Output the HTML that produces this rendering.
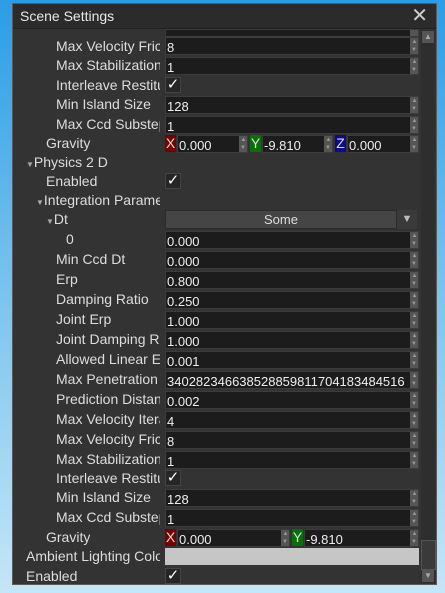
<!DOCTYPE html><html><head><style>
body{margin:0;width:445px;height:593px;overflow:hidden;background:linear-gradient(#2a9de6,#7cc4ee 50%,#c4e6f6);font-family:"Liberation Sans",sans-serif;position:relative}
.win{position:absolute;left:12px;top:3px;width:423px;height:580px;background:#333;border:1px solid #5a5a5a}
.title{position:absolute;left:0;top:0;width:423px;height:24px;background:#2b2b2b;color:#e8e8e8;font-size:14px;line-height:24px;text-indent:7px;border-bottom:1px solid #222}
.x{position:absolute;right:8px;top:0;font-size:20px;color:#ccc;line-height:24px}
.l{position:absolute;color:#ddd;font-size:14px;white-space:nowrap;overflow:hidden;line-height:16px}
.f{position:absolute;left:152px;width:252px;height:16px;background:#1c1c1c;border:1px solid #3c3c3c;color:#eee;font-size:13px;line-height:20px;text-indent:1px;overflow:hidden;white-space:nowrap}
.s{position:absolute;right:0;top:0;width:8px;height:16px;background:#555;color:#999;font-size:6px;line-height:8px;text-align:center}
.c{position:absolute;left:152px;width:14px;height:14px;border:1px solid #444;background:#262626;color:#fff;font-size:15px;line-height:14px;text-align:center}
.b{position:absolute;width:11px;height:17px;color:#ddd;font-size:14px;line-height:17px;text-align:center}
.sb{position:absolute;left:408px;top:26px;width:14px;height:553px;background:#2e2e2e}
</style></head><body><div class="win">
<div class="title">Scene Settings<span class="x">✕</span></div>
<div class="sb"><div style="position:absolute;left:1px;top:1px;width:12px;height:12px;background:#555;color:#aaa;font-size:8px;text-align:center;line-height:12px">▲</div><div style="position:absolute;left:0;top:510px;width:13px;height:28px;background:#3a3a3a;border:1px solid #555"></div><div style="position:absolute;left:1px;top:540px;width:12px;height:12px;background:#555;color:#aaa;font-size:8px;text-align:center;line-height:12px">▼</div></div>
<div class="f" style="top:25px;height:6px"><div class="s" style="height:6px"></div></div>
<div class="l" style="left:43px;top:34px;width:104px">Max Velocity Friction</div><div class="f" style="top:33px">8<div class="s">▲<br>▼</div></div>
<div class="l" style="left:43px;top:53px;width:104px">Max Stabilization</div><div class="f" style="top:53px">1<div class="s">▲<br>▼</div></div>
<div class="l" style="left:43px;top:73px;width:104px">Interleave Restitution</div><div class="c" style="top:73px">✓</div>
<div class="l" style="left:43px;top:92px;width:104px">Min Island Size</div><div class="f" style="top:92px">128<div class="s">▲<br>▼</div></div>
<div class="l" style="left:43px;top:112px;width:104px">Max Ccd Substeps</div><div class="f" style="top:112px">1<div class="s">▲<br>▼</div></div>
<div class="l" style="left:33px;top:131px;width:110px">Gravity</div>
<div class="b" style="left:152px;top:131px;background:#7a0000">X</div><div class="f" style="left:164px;width:69px;top:131px">0.000<div class="s">▲<br>▼</div></div>
<div class="b" style="left:237px;top:131px;background:#0a6e0a">Y</div><div class="f" style="left:249px;width:69px;top:131px">-9.810<div class="s">▲<br>▼</div></div>
<div class="b" style="left:322px;top:131px;background:#0a0a8a">Z</div><div class="f" style="left:334px;width:70px;top:131px">0.000<div class="s">▲<br>▼</div></div>
<div class="l" style="left:13px;top:150px;width:140px"><span style="font-size:8px;color:#aaa">▼</span>Physics 2 D</div>
<div class="l" style="left:33px;top:169px">Enabled</div><div class="c" style="top:169px">✓</div>
<div class="l" style="left:23px;top:188px;width:124px"><span style="font-size:8px;color:#aaa">▼</span>Integration Parameters</div>
<div class="l" style="left:33px;top:207px"><span style="font-size:8px;color:#aaa">▼</span>Dt</div>
<div style="position:absolute;left:152px;top:206px;width:230px;height:17px;background:#454545;border:1px solid #2a2a2a;color:#ddd;font-size:13px;line-height:17px;text-align:center">Some</div><div style="position:absolute;left:384px;top:206px;width:20px;height:19px;background:#3a3a3a;color:#bbb;font-size:11px;text-align:center;line-height:19px">▼</div>
<div class="l" style="left:53px;top:227px">0</div><div class="f" style="top:227px">0.000<div class="s">▲<br>▼</div></div>
<div class="l" style="left:43px;top:247px;width:104px">Min Ccd Dt</div><div class="f" style="top:247px">0.000<div class="s">▲<br>▼</div></div>
<div class="l" style="left:43px;top:267px;width:104px">Erp</div><div class="f" style="top:267px">0.800<div class="s">▲<br>▼</div></div>
<div class="l" style="left:43px;top:287px;width:104px">Damping Ratio</div><div class="f" style="top:287px">0.250<div class="s">▲<br>▼</div></div>
<div class="l" style="left:43px;top:307px;width:104px">Joint Erp</div><div class="f" style="top:307px">1.000<div class="s">▲<br>▼</div></div>
<div class="l" style="left:43px;top:327px;width:104px">Joint Damping Ratio</div><div class="f" style="top:327px">1.000<div class="s">▲<br>▼</div></div>
<div class="l" style="left:43px;top:347px;width:104px">Allowed Linear Error</div><div class="f" style="top:347px">0.001<div class="s">▲<br>▼</div></div>
<div class="l" style="left:43px;top:367px;width:104px">Max Penetration</div><div class="f" style="top:367px">340282346638528859811704183484516<div class="s">▲<br>▼</div></div>
<div class="l" style="left:43px;top:387px;width:104px">Prediction Distance</div><div class="f" style="top:387px">0.002<div class="s">▲<br>▼</div></div>
<div class="l" style="left:43px;top:407px;width:104px">Max Velocity Iterations</div><div class="f" style="top:407px">4<div class="s">▲<br>▼</div></div>
<div class="l" style="left:43px;top:427px;width:104px">Max Velocity Friction</div><div class="f" style="top:427px">8<div class="s">▲<br>▼</div></div>
<div class="l" style="left:43px;top:447px;width:104px">Max Stabilization</div><div class="f" style="top:447px">1<div class="s">▲<br>▼</div></div>
<div class="l" style="left:43px;top:466px;width:104px">Interleave Restitution</div><div class="c" style="top:466px">✓</div>
<div class="l" style="left:43px;top:485px;width:104px">Min Island Size</div><div class="f" style="top:485px">128<div class="s">▲<br>▼</div></div>
<div class="l" style="left:43px;top:505px;width:104px">Max Ccd Substeps</div><div class="f" style="top:505px">1<div class="s">▲<br>▼</div></div>
<div class="l" style="left:33px;top:525px">Gravity</div>
<div class="b" style="left:152px;top:525px;background:#7a0000">X</div><div class="f" style="left:164px;width:111px;top:525px">0.000<div class="s">▲<br>▼</div></div>
<div class="b" style="left:279px;top:525px;background:#0a6e0a">Y</div><div class="f" style="left:291px;width:113px;top:525px">-9.810<div class="s">▲<br>▼</div></div>
<div class="l" style="left:13px;top:544px;width:134px">Ambient Lighting Color</div><div style="position:absolute;left:152px;top:544px;width:254px;height:17px;background:#c6c6c6"></div>
<div class="l" style="left:13px;top:564px">Enabled</div><div class="c" style="top:564px">✓</div>
</div></body></html>
